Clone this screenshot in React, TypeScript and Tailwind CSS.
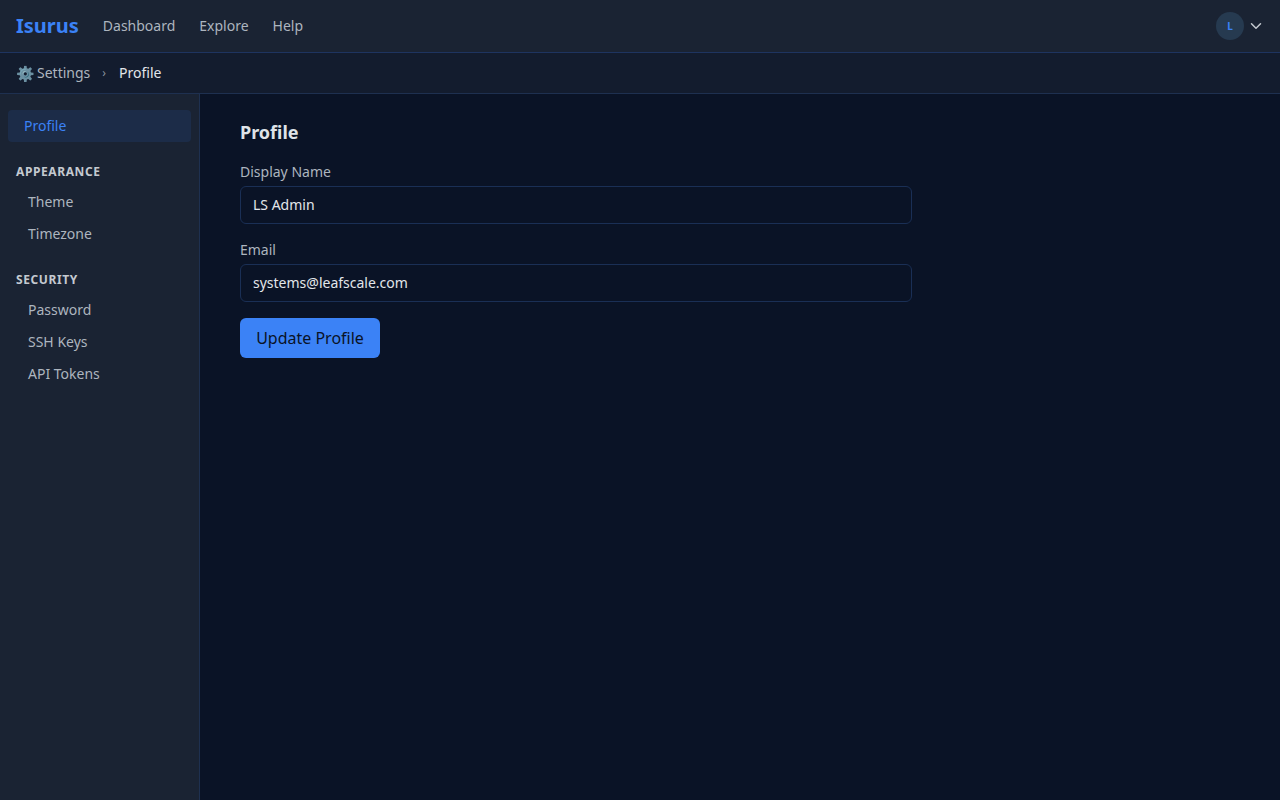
export default function App() {
  return (
    <div className="h-[800px] w-[1280px] overflow-hidden flex flex-col bg-[#0a1326] font-['Noto_Sans',sans-serif] text-sm text-[#c4c9d0]">
      <header className="h-[53px] shrink-0 flex items-center justify-between bg-[#1a2333] border-b border-[#1e3460] pl-4 pr-4">
        <div className="flex items-center">
          <span className="text-xl font-bold text-[#3b82f6] leading-7">Isurus</span>
          <nav className="flex items-center gap-6 ml-6 text-sm text-[#adb5bf]">
            <span>Dashboard</span>
            <span>Explore</span>
            <span>Help</span>
          </nav>
        </div>
        <div className="flex items-center gap-[3px]">
          <div className="w-7 h-7 rounded-full bg-[#263a50] flex items-center justify-center text-[10px] font-bold text-[#3b82f6]">L</div>
          <svg className="w-[18px] h-[18px] -mr-px text-[#c4c9d0]" viewBox="0 0 24 24" fill="none" stroke="currentColor" strokeWidth="2" strokeLinecap="round" strokeLinejoin="round"><path d="m6 9 6 6 6-6" /></svg>
        </div>
      </header>
      <div className="h-[41px] shrink-0 flex items-center bg-[#131c2e] border-b border-[#1e3050] pl-4 text-sm">
        <span className="mr-[2px] leading-none text-[15px] opacity-80">⚙️</span>
        <span className="text-[#adb5bf]">Settings</span>
        <span className="ml-3 mr-[13px] text-xs text-[#8a929c]">›</span>
        <span className="text-[#e2e6ea]">Profile</span>
      </div>
      <div className="flex-1 flex min-h-0">
        <aside className="w-[200px] shrink-0 bg-[#1a2333] border-r border-[#1e3050] pt-4 px-2">
          <div className="h-8 rounded bg-[#1c2c48] text-[#3b82f6] flex items-center pl-4">Profile</div>
          <div className="mt-[22px] pl-2 text-xs font-bold tracking-wider text-[#c4c9d0] leading-4">APPEARANCE</div>
          <div className="mt-[6px] text-[#adb5bf]">
            <div className="h-8 flex items-center pl-5">Theme</div>
            <div className="h-8 flex items-center pl-5">Timezone</div>
          </div>
          <div className="mt-[22px] pl-2 text-xs font-bold tracking-wider text-[#c4c9d0] leading-4">SECURITY</div>
          <div className="mt-[6px] text-[#adb5bf]">
            <div className="h-8 flex items-center pl-5">Password</div>
            <div className="h-8 flex items-center pl-5">SSH Keys</div>
            <div className="h-8 flex items-center pl-5">API Tokens</div>
          </div>
        </aside>
        <main className="flex-1 px-10 pt-6">
          <div className="w-[672px]">
            <h1 className="text-lg font-bold leading-7 text-[#dfe3e8]">Profile</h1>
            <label className="block mt-4 text-sm leading-5 text-[#adb5bf]">Display Name</label>
            <div className="mt-[4px] h-[38px] rounded-md border border-[#1a2f55] bg-[#0a1326] flex items-center px-3 text-[#e2e6ea]">LS Admin</div>
            <label className="block mt-4 text-sm leading-5 text-[#adb5bf]">Email</label>
            <div className="mt-[4px] h-[38px] rounded-md border border-[#1a2f55] bg-[#0a1326] flex items-center px-3 text-[#e2e6ea]">systems@leafscale.com</div>
            <button className="mt-4 h-10 w-[140px] rounded-md bg-[#3b82f6] text-base text-[#0a1326]">Update Profile</button>
          </div>
        </main>
      </div>
    </div>
  );
}
